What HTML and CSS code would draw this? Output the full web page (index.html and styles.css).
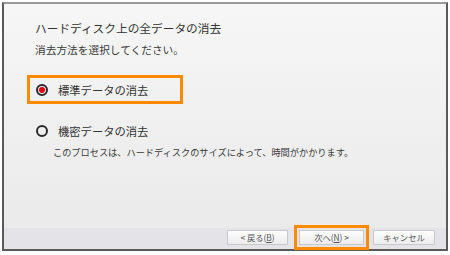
FILE: index.html
```html
<!DOCTYPE html>
<html lang="ja">
<head>
    <meta charset="UTF-8">
    <title>ハードディスク上の全データの消去</title>
    <link rel="stylesheet" href="styles.css">
</head>
<body>
    <div class="dialog">
        <div class="main">
            <h1 class="title">ハードディスク上の全データの消去</h1>
            <p class="subtitle">消去方法を選択してください。</p>
            <div class="option highlight">
                <span class="radio checked"></span>
                <span class="label">標準データの消去</span>
            </div>
            <div class="option">
                <span class="radio"></span>
                <span class="label">機密データの消去</span>
            </div>
            <p class="desc">このプロセスは、ハードディスクのサイズによって、時間がかかります。</p>
        </div>
        <div class="footer">
            <button class="btn">&lt; 戻る(<u>B</u>)</button>
            <button class="btn btn-next">次へ(<u>N</u>) &gt;</button>
            <button class="btn btn-cancel">キャンセル</button>
        </div>
    </div>
</body>
</html>
```

FILE: styles.css
```css
body {
    margin: 0;
    background-color: #fff;
    font-family: "Noto Sans CJK JP", "Noto Sans", sans-serif;
    color: #333;
}
.dialog {
    margin: 2px 0 0 2px;
    width: 446px;
    height: 249px;
    box-sizing: border-box;
    border: 2px solid #5a5a5a;
    border-top-color: #999;
    display: flex;
    flex-direction: column;
    background: linear-gradient(#f6f6f6, #f1f1f1 40%, #e9e9ea);
}
.main {
    flex: 1;
    padding: 16px 0 0 23px;
}
.title {
    margin: 0;
    padding-left: 8px;
    font-size: 11.7px;
    font-weight: normal;
    line-height: 16px;
    color: #333;
}
.subtitle {
    margin: 7px 0 0;
    padding-left: 8px;
    font-size: 10.7px;
    line-height: 14px;
    color: #3a3a3a;
}
.option {
    display: flex;
    align-items: center;
    width: 144px;
    height: 23px;
    padding-left: 6px;
    border: 3px solid transparent;
    margin-top: 12px;
    font-size: 11.3px;
}
.option.highlight {
    border-color: #ff8a00;
    margin-top: 18px;
}
.radio {
    width: 12px;
    height: 12px;
    box-sizing: border-box;
    border: 2px solid #2a2a2a;
    border-radius: 50%;
    margin-right: 10px;
    display: flex;
    align-items: center;
    justify-content: center;
}
.radio.checked::after {
    content: "";
    width: 6px;
    height: 6px;
    border-radius: 50%;
    background-color: #e8000b;
}
.desc {
    margin: 0;
    padding-left: 26px;
    font-size: 9.2px;
    line-height: 14px;
    color: #3a3a3a;
}
.footer {
    height: 21px;
    box-sizing: border-box;
    padding: 2px 11px 0 0;
    background-color: #e3e3e8;
    display: flex;
    justify-content: flex-end;
    align-items: flex-start;
}
.btn {
    height: 15px;
    width: 61px;
    padding: 0;
    margin-left: 11px;
    border: 1px solid #c9c9cc;
    border-radius: 1px;
    background: linear-gradient(#fefefe, #ececec);
    font-family: "Noto Sans CJK JP", "Noto Sans", sans-serif;
    font-size: 8.3px;
    line-height: 13px;
    color: #555;
}
.btn-next {
    width: 65px;
    border-radius: 0;
    outline: 3px solid #ff8a00;
    outline-offset: 2px;
}
.btn-cancel {
    width: 62px;
    margin-left: 9px;
}
```
